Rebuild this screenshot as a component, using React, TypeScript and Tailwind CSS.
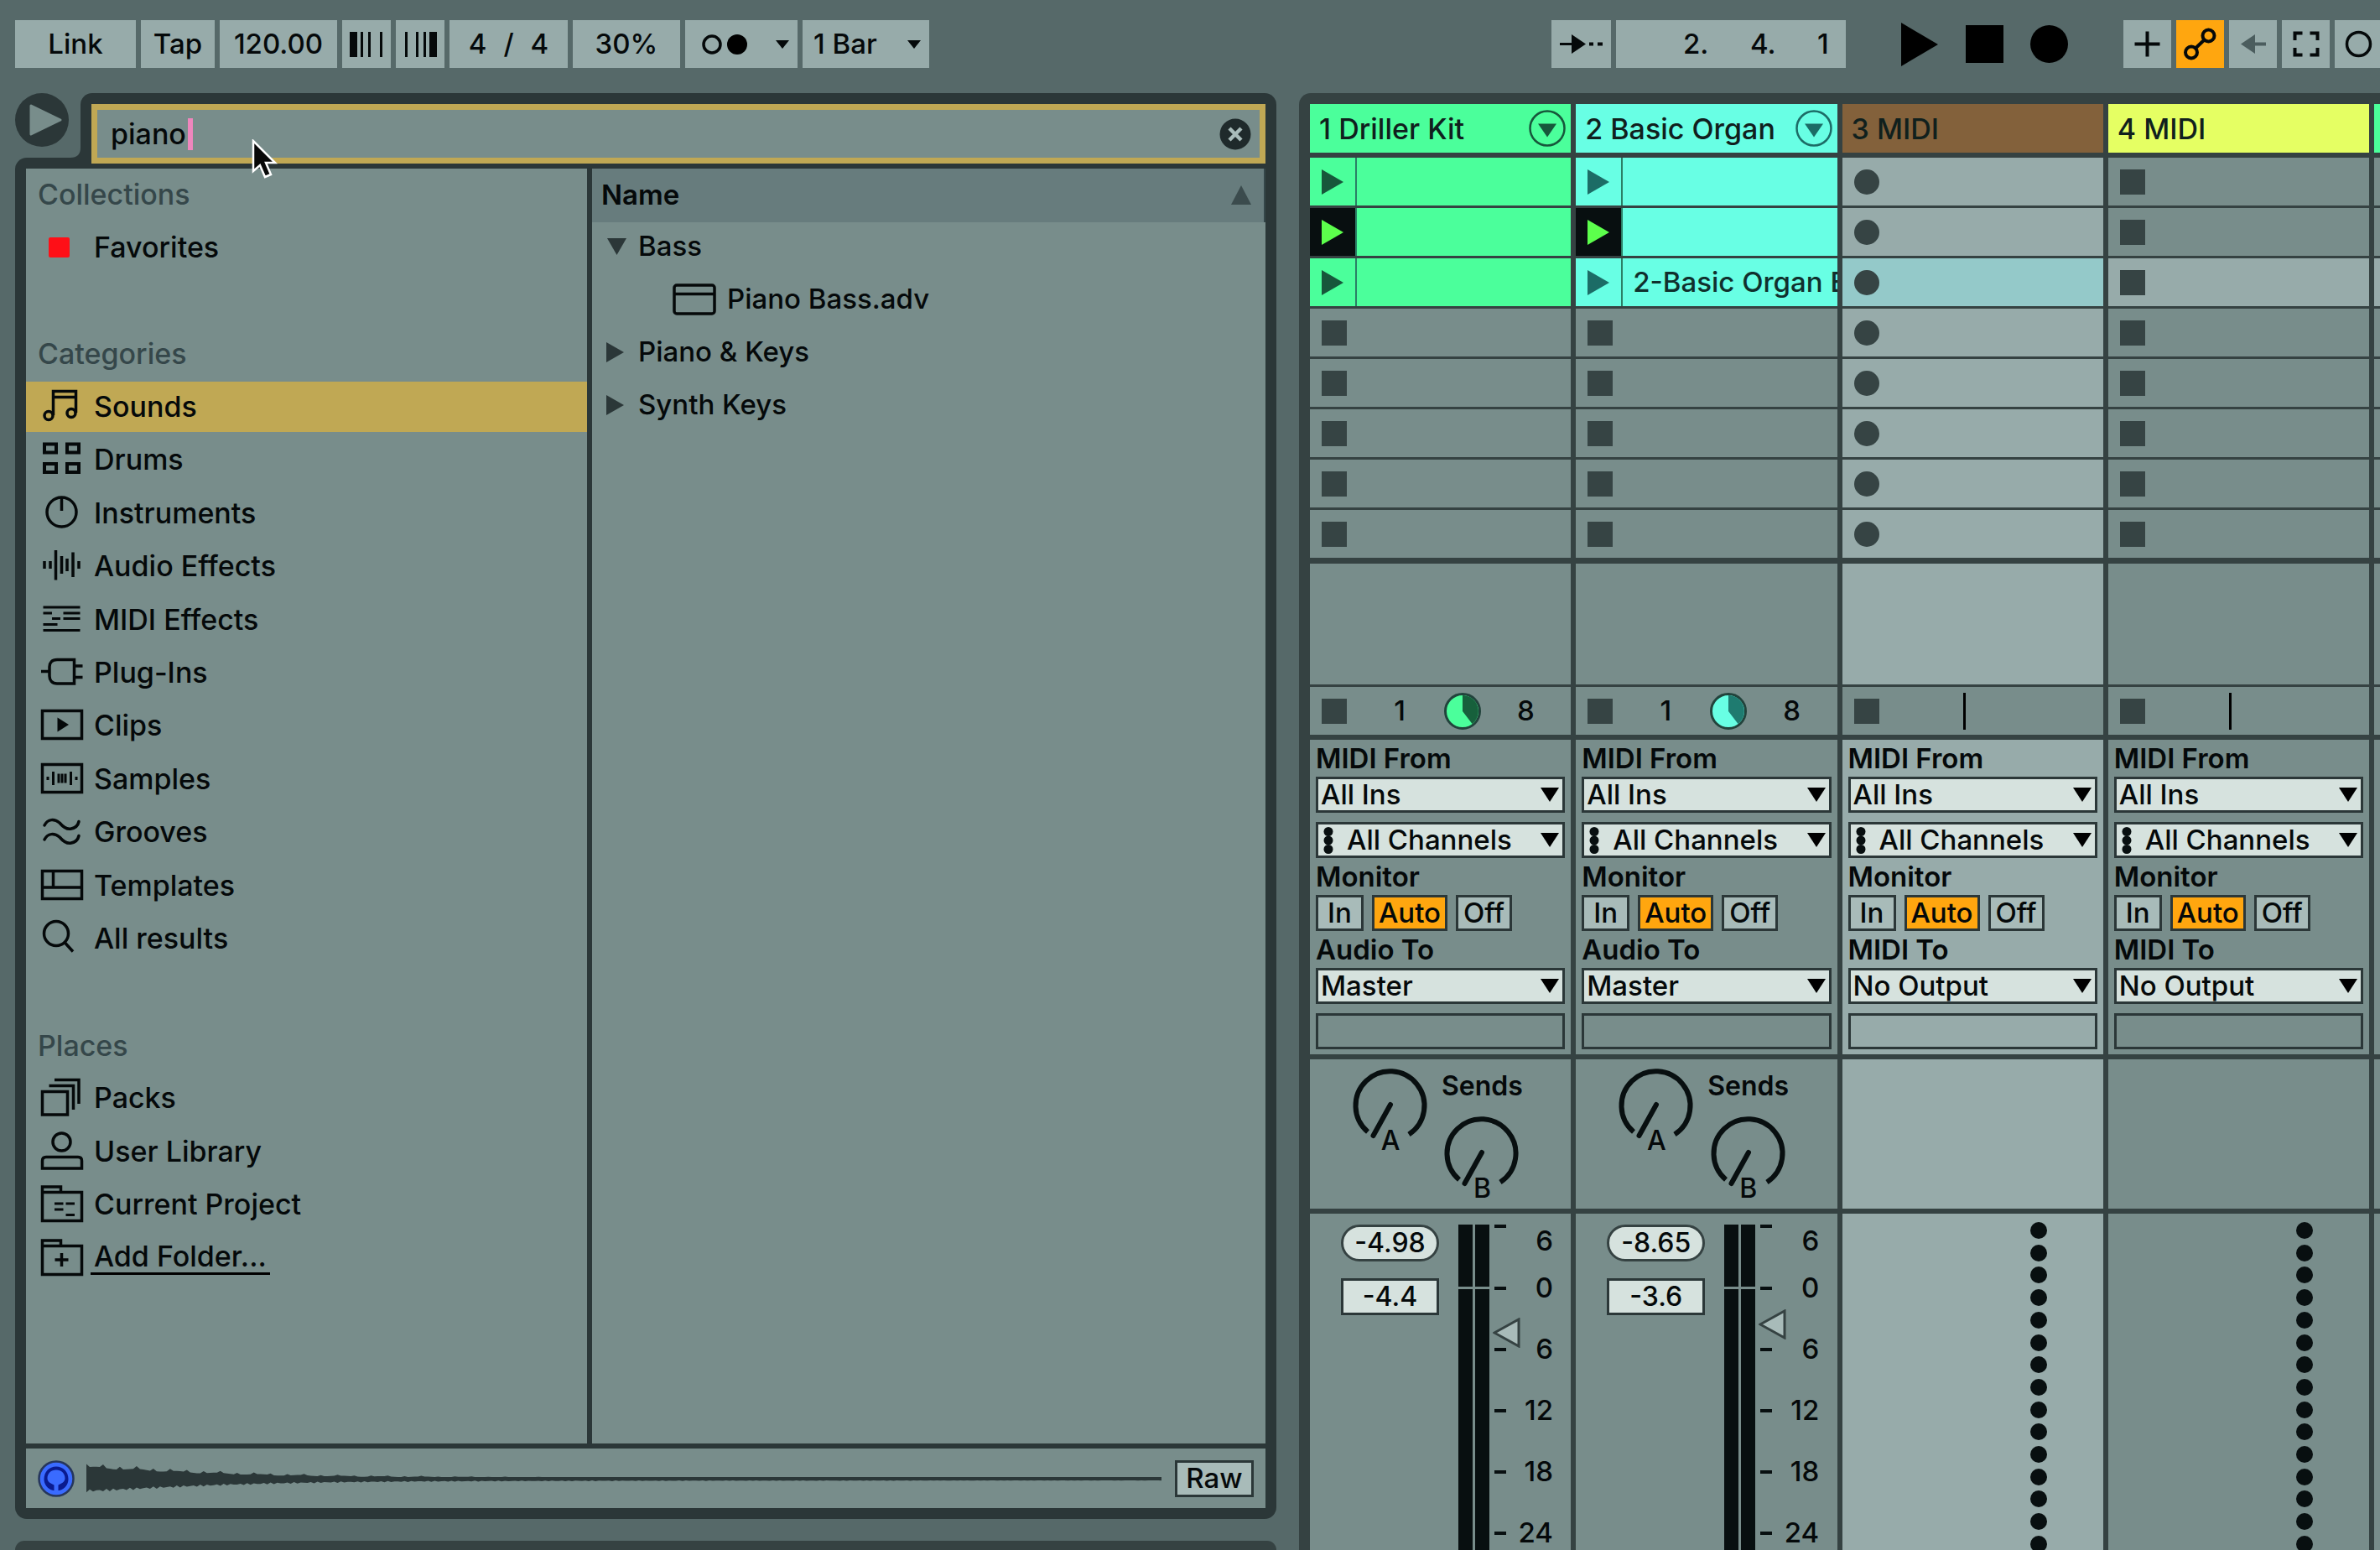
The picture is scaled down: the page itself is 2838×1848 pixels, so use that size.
import React, { useState } from "react";

type IconProps = { children: React.ReactNode };

/* 52px line icon used by the browser sidebar */
function RowIcon({ children }: IconProps) {
  return (
    <svg viewBox="0 0 52 52" className="h-[52px] w-[52px] shrink-0" fill="none" stroke="#05090a" strokeWidth="3.5" aria-hidden="true">
      {children}
    </svg>
  );
}

const icons: Record<string, React.ReactNode> = {
  favorites: <rect x="10" y="14" width="25" height="24" rx="2" fill="#fe0f17" stroke="none" />,
  sounds: (
    <>
      <path d="M15.5 36V7.5H42.5V33M15.5 14.5H42.5" />
      <circle cx="10" cy="36.500" r="5" />
      <circle cx="37" cy="33.500" r="5" />
    </>
  ),
  drums: (
    <path strokeWidth="4" d="M5 7.500H19V17.500H5zM32 7.500H46V17.500H32zM5 31H19V41H5zM32 31H46V41H32z" />
  ),
  instruments: (
    <>
      <circle cx="25.500" cy="24.500" r="17.500" />
      <path d="M25.500 7V23" />
    </>
  ),
  audio: (
    <path d="M5 20V29M12 20V29M18.500 7V42.500M25.500 14V35M32 17V32M39 9.500V39M46 20V29" />
  ),
  midi: (
    <path strokeWidth="3.200" d="M3.500 11H47.500M3.500 18H14M27.500 18H47.500M14 24.500H24M27.500 24.500H47.500M3.500 31.500H20.500M3.500 38.500H47.500" />
  ),
  plug: (
    <path d="M1 24.500H11M40.500 10.500H20C14 10.500 11 14 11 19V30C11 35 14 39 20 39H40.500zM40.500 18H50.500M40.500 31.500H50.500" />
  ),
  clips: (
    <>
      <rect x="2.500" y="8.500" width="47" height="33" />
      <path d="M20.500 16.500L34 25L20.500 33.500z" fill="#05090a" stroke="none" />
    </>
  ),
  samples: (
    <>
      <rect x="2.500" y="8.500" width="47" height="33" />
      <path strokeWidth="3" d="M9 23V27M15.500 17V33M22 19.500V30.500M26 19.500V30.500M30 19.500V30.500M36.500 17V33M43 23V27" />
    </>
  ),
  grooves: (
    <path
      strokeLinecap="round"
      d="M5 18C9 10 17 10 23 15C29 22 33 23 37 22C42 21 45 18 46 13.500M5 35C9 27 17 27 23 32C29 39 33 40 37 39C42 38 45 35 46 30.500"
    />
  ),
  templates: <path d="M2.500 8.500H49.500V41.500H2.500zM2.500 28H49.500M15.500 8.500V28" />,
  search: (
    <>
      <circle cx="19" cy="20" r="14.500" />
      <path d="M29 30.500L39 41.500" />
    </>
  ),
  packs: (
    <path d="M2.500 18.500H32.500V46H2.500zM10.500 11.500H39.500V40M17 4.500H46V33" />
  ),
  user: (
    <>
      <circle cx="25.500" cy="14.500" r="10.500" />
      <path d="M2.500 46V37C2.500 34 4.500 32.500 7 32.500H45C47.500 32.500 49.500 34 49.500 37V46z" />
    </>
  ),
  project: (
    <>
      <path d="M2.500 11.500V5H24.500V11.500M2.500 11.500H49.500V45.500H2.500z" />
      <path strokeWidth="3" d="M17 25H27.500M30.500 25H41M17 32H27.500M30.500 38.500H41" />
    </>
  ),
  add: (
    <path d="M2.500 11.500V5H24.500V11.500M2.500 11.500H49.500V45.500H2.500zM25.500 20V36M17.500 28H33.500" />
  ),
};

type SideRow = { kind: "title" | "item" | "blank"; label?: string; icon?: string };

const sideRows: SideRow[] = [
  { kind: "title", label: "Collections" },
  { kind: "item", label: "Favorites", icon: "favorites" },
  { kind: "blank" },
  { kind: "title", label: "Categories" },
  { kind: "item", label: "Sounds", icon: "sounds" },
  { kind: "item", label: "Drums", icon: "drums" },
  { kind: "item", label: "Instruments", icon: "instruments" },
  { kind: "item", label: "Audio Effects", icon: "audio" },
  { kind: "item", label: "MIDI Effects", icon: "midi" },
  { kind: "item", label: "Plug-Ins", icon: "plug" },
  { kind: "item", label: "Clips", icon: "clips" },
  { kind: "item", label: "Samples", icon: "samples" },
  { kind: "item", label: "Grooves", icon: "grooves" },
  { kind: "item", label: "Templates", icon: "templates" },
  { kind: "item", label: "All results", icon: "search" },
  { kind: "blank" },
  { kind: "title", label: "Places" },
  { kind: "item", label: "Packs", icon: "packs" },
  { kind: "item", label: "User Library", icon: "user" },
  { kind: "item", label: "Current Project", icon: "project" },
  { kind: "item", label: "Add Folder...", icon: "add" },
];

const toolBase = "flex h-[57px] shrink-0 items-center bg-[#97abaa]";
const toolButton = "flex h-[57px] shrink-0 items-center justify-center bg-[#97abaa]";

function Toolbar() {
  return (
    <header className="flex h-[111px] items-start overflow-hidden pt-6 pl-[18px] text-[33px]">
      <div className="flex gap-[6px]">
        <button className={`${toolButton} w-[144px]`}>Link</button>
        <button className={`${toolButton} w-[88px]`}>Tap</button>
        <button className={`${toolButton} w-[140px]`}>120.00</button>
        <button className={`${toolButton} w-[58px]`} aria-label="Nudge down">
          <svg viewBox="0 0 58 57" className="h-[57px] w-[58px]" fill="#05090a">
            <path d="M9 14h9v30h-9zM22 14h3v30h-3zM31 14h3v30h-3zM45 14h3v30h-3z" />
          </svg>
        </button>
        <button className={`${toolButton} w-[58px]`} aria-label="Nudge up">
          <svg viewBox="0 0 58 57" className="h-[57px] w-[58px]" fill="#05090a">
            <path d="M11 14h3v30h-3zM24 14h3v30h-3zM33 14h3v30h-3zM40 14h9v30h-9z" />
          </svg>
        </button>
        <button className={`${toolButton} w-[141px] gap-5`}>
          <span>4</span>
          <span>/</span>
          <span>4</span>
        </button>
        <button className={`${toolButton} w-[128px]`}>30%</button>
        <button className={`${toolButton} w-[134px]`} aria-label="Metronome">
          <svg viewBox="0 0 134 57" className="h-[57px] w-[134px]">
            <circle cx="32" cy="29" r="10" fill="none" stroke="#05090a" strokeWidth="3.500" />
            <circle cx="62" cy="29" r="12" fill="#000" />
            <path d="M108 24h16l-8 10z" fill="#05090a" />
          </svg>
        </button>
        <button className={`${toolBase} w-[151px] justify-between pr-[10px] pl-[13px]`}>
          <span>1 Bar</span>
          <svg viewBox="0 0 16 10" className="h-[10px] w-4" fill="#05090a">
            <path d="M0 0h16l-8 10z" />
          </svg>
        </button>
      </div>
      <div className="ml-auto flex items-start">
        <div className="flex gap-[6px]">
          <button className={`${toolButton} w-[71px]`} aria-label="Follow">
            <svg viewBox="0 0 71 57" className="h-[57px] w-[71px]" fill="#05090a">
              <path d="M10 27h14v-10l17 11.500l-17 11.500v-10h-14zM45 26.500h5v4h-5zM55 26.500h6v4h-6z" />
            </svg>
          </button>
          <div className={`${toolBase} w-[274px] pl-20`}>
            <span className="w-20">2.</span>
            <span className="w-20">4.</span>
            <span>1</span>
          </div>
        </div>
        <div className="flex h-[57px] items-center pr-[66px] pl-[66px]">
          <button aria-label="Play">
            <svg viewBox="0 0 44 52" className="h-[52px] w-[44px]"><path d="M0 0L44 26L0 52z" /></svg>
          </button>
          <button aria-label="Stop" className="ml-[33px] h-[45px] w-[45px] bg-black" />
          <button aria-label="Record" className="ml-8 h-[45px] w-[45px] rounded-full bg-black" />
        </div>
        <div className="flex gap-[6px]">
          <button className={`${toolButton} w-[57px]`} aria-label="Overdub">
            <svg viewBox="0 0 57 57" className="h-[57px] w-[57px]" stroke="#05090a" strokeWidth="4">
              <path d="M13.500 28.500h30M28.500 13.500v30" />
            </svg>
          </button>
          <button className="flex h-[57px] w-[57px] shrink-0 items-center justify-center bg-[#ffa60f]" aria-label="Automation arm">
            <svg viewBox="0 0 57 57" className="h-[57px] w-[57px]" fill="none" stroke="#05090a" strokeWidth="4">
              <circle cx="38.500" cy="18.500" r="7" />
              <circle cx="18" cy="38.500" r="7" />
              <path d="M23 33.500L33.500 23.500" />
            </svg>
          </button>
          <button className={`${toolButton} w-[57px]`} aria-label="Re-enable automation">
            <svg viewBox="0 0 57 57" className="h-[57px] w-[57px]" fill="#4b5d5e">
              <path d="M14 28.500L31 17v9.500h13v4h-13v9.500z" />
            </svg>
          </button>
          <button className={`${toolButton} w-[57px]`} aria-label="Capture MIDI">
            <svg viewBox="0 0 57 57" className="h-[57px] w-[57px]" fill="none" stroke="#05090a" strokeWidth="4">
              <path d="M15.500 24v-8.500h9M33.500 15.500h9v8.500M42.500 33v8.500h-9M24.500 41.500h-9v-8.500" />
            </svg>
          </button>
          <button className="flex h-[57px] w-[54px] shrink-0 items-center overflow-hidden bg-[#97abaa]" aria-label="Session record">
            <svg viewBox="0 0 57 57" className="h-[57px] w-[57px] shrink-0" fill="none" stroke="#05090a" strokeWidth="3.500">
              <circle cx="28.500" cy="28.500" r="14" />
            </svg>
          </button>
        </div>
      </div>
    </header>
  );
}

/* Decaying sample preview: a smooth envelope with a bump every 20px */
function wavePath() {
  const top: string[] = [];
  const bottom: string[] = [];
  for (let x = 0; x <= 1286; x += 4) {
    const env = 1.9 + 11 * Math.exp(-Math.pow(x / 165, 1.3)) + 1.6 * Math.exp(-x / 600);
    const beat = x % 20 === 0 ? 4 * Math.exp(-x / 260) : 0;
    const a = env + beat - 1 + Math.sin(x * 1.7) * 1.1 * Math.exp(-x / 400);
    const b = env + Math.cos(x * 0.9) * 1.8 * Math.exp(-x / 400);
    top.push(`${x} ${(22 - Math.max(a, 1.9)).toFixed(1)}`);
    bottom.unshift(`${x} ${(22 + b).toFixed(1)}`);
  }
  return `M${top.join("L")}L${bottom.join("L")}z`;
}

function Triangle({ open }: { open?: boolean }) {
  return (
    <svg viewBox="0 0 24 24" className="h-6 w-6 shrink-0" fill="#2b3738" aria-hidden="true">
      <path d={open ? "M1 2H24L12.500 22z" : "M0 0L21 12L0 24z"} />
    </svg>
  );
}

function Browser() {
  const [query, setQuery] = useState("piano");
  const [selected, setSelected] = useState("Sounds");
  return (
    <section className="flex min-w-0 flex-col">
      <div className="relative z-10 flex">
        <div className="flex w-[78px] shrink-0 items-start">
          <button aria-label="Hide browser" className="flex h-16 w-16 items-center justify-center rounded-full bg-[#2b3738]">
            <svg viewBox="0 0 64 64" className="h-16 w-16" fill="#788d8b" stroke="#788d8b" strokeWidth="3" strokeLinejoin="round">
              <path d="M19 15L54 32L19 49z" />
            </svg>
          </button>
        </div>
        <div className="relative flex-1 rounded-t-[14px] bg-[#2b3738] px-[13px] pt-[13px]">
          <svg viewBox="0 0 12 12" className="absolute bottom-[7px] -left-3 h-3 w-3" fill="#2b3738" aria-hidden="true">
            <path d="M12 0V12H0C8 12 12 8 12 0z" />
          </svg>
          <label className="flex h-[71px] items-center border-[7px] border-[#c0a854] bg-[#788d8b] pr-[10px] pl-4">
            <span className="sr-only">Search</span>
            <input
              value={query}
              onChange={(e) => setQuery(e.target.value)}
              className="field-sizing-content h-[54px] bg-transparent pr-[2px] text-[34px] leading-[50px] outline-none"
            />
            <span className="h-[38px] w-[6px] bg-[#ee86bd]" />
            <button aria-label="Clear search" className="ml-auto">
              <svg viewBox="0 0 38 38" className="h-[38px] w-[38px]">
                <circle cx="19" cy="19" r="18.500" fill="#1f2a2b" />
                <path d="M12 12L26 26M26 12L12 26" stroke="#a9bcba" strokeWidth="4.500" />
              </svg>
            </button>
          </label>
        </div>
      </div>

      <div className="-mt-[7px] flex flex-1 flex-col rounded-b-[14px] rounded-tl-[14px] bg-[#2b3738] px-[13px] pt-[13px] pb-[13px]">
        <div className="grid flex-1 grid-cols-[669fr_803fr] gap-[6px]">
          <nav className="bg-[#788d8b]">
            <ul className="grid h-[1329px] grid-rows-[repeat(21,minmax(0,1fr))] gap-[3px] text-[34px]">
              {sideRows.map((row, i) => {
                if (row.kind === "blank") return <li key={i} />;
                if (row.kind === "title")
                  return (
                    <li key={i} className="flex items-center pl-[14px] text-[#35474a]">
                      <h2>{row.label}</h2>
                    </li>
                  );
                return (
                  <li key={i} className="flex">
                    <button
                      onClick={() => setSelected(row.label!)}
                      className={
                        selected === row.label
                          ? "flex flex-1 items-center gap-2 bg-[#c0a854] pl-[17px]"
                          : "flex flex-1 items-center gap-2 pl-[17px]"
                      }
                    >
                      <RowIcon>{icons[row.icon!]}</RowIcon>
                      <span
                        className={
                          row.icon === "add"
                            ? "border-b-[3px] border-black px-1 leading-[38px]"
                            : "px-1 leading-[38px]"
                        }
                      >
                        {row.label}
                      </span>
                    </button>
                  </li>
                );
              })}
            </ul>
          </nav>
          <div className="bg-[#788d8b] text-[33px]">
            <div className="flex h-16 items-center justify-between border-r-2 border-[#35474a] bg-[#677c7d] pr-[15px] pl-[11px]">
              <h2 className="font-semibold">Name</h2>
              <svg viewBox="0 0 24 24" className="h-6 w-6" fill="#3b4b4d" aria-hidden="true">
                <path d="M12 0L24 23H0z" />
              </svg>
            </div>
            <ul className="flex flex-col gap-[6px]">
              <li className="flex h-[57px] items-center gap-[14px] pl-[17px]">
                <Triangle open />
                Bass
              </li>
              <li className="flex h-[57px] items-center gap-[13px] pl-[96px]">
                <svg viewBox="0 0 52 38" className="h-[38px] w-[52px]" fill="none" stroke="#05090a" strokeWidth="3.500">
                  <rect x="2" y="2" width="48" height="34" rx="3" />
                  <path d="M2 12.500H50" />
                </svg>
                Piano Bass.adv
              </li>
              <li className="flex h-[57px] items-center gap-[14px] pl-[17px]">
                <Triangle />
                Piano &amp; Keys
              </li>
              <li className="flex h-[57px] items-center gap-[14px] pl-[17px]">
                <Triangle />
                Synth Keys
              </li>
            </ul>
          </div>
        </div>
        <div className="mt-[6px] flex h-[71px] items-center bg-[#788d8b] pr-[14px] pl-[14px]">
          <button aria-label="Preview" className="shrink-0">
            <svg viewBox="0 0 44 44" className="h-[44px] w-[44px]">
              <circle cx="22" cy="22" r="20.500" fill="#3a6bff" stroke="#26365c" strokeWidth="2.500" />
              <path d="M18.500 36C11 34.500 7.500 28 7.500 22.500C7.500 14 13.500 7.500 22 7.500S36.500 14 36.500 22.500C36.500 28 33 34.500 25.500 36z" fill="#0a1b8f" />
              <path d="M19.500 37V29.500C15.500 27.500 11.500 26 11.500 21.500C11.500 15.500 16 11.500 22 11.500S32.500 15.500 32.500 21.500C32.500 26 28.500 27.500 24.500 29.500V37z" fill="#3a6bff" />
            </svg>
          </button>
          <svg viewBox="0 0 1286 44" preserveAspectRatio="none" className="mr-[14px] ml-[14px] h-[44px] min-w-0 flex-1" fill="#2b3738">
            <path d={wavePath()} />
          </svg>
          <button className="flex h-[44px] w-[94px] shrink-0 items-center justify-center border-[3px] border-[#2b3738] bg-[#a8bbb9] text-[33px]">
            Raw
          </button>
        </div>
      </div>
      <div className="mt-[26px] h-[11px] rounded-t-[14px] bg-[#354242]" />
    </section>
  );
}

type Slot = { kind: "clip" | "playing" | "stop" | "record"; label?: string; lit?: boolean };
type Track = {
  name: string;
  header: string;
  clip: string;
  glyph: string;
  fold?: boolean;
  light?: boolean;
  slots: Slot[];
  out: string;
  outLabel: string;
  pie?: { full: string; dark: string };
  peak?: string;
  volume?: string;
  thumb?: string;
};

const stop: Slot = { kind: "stop" };
const rec: Slot = { kind: "record" };

const tracks: Track[] = [
  {
    name: "1 Driller Kit",
    header: "bg-[#4bff9b]",
    clip: "bg-[#4bff9b]",
    glyph: "#17573b",
    fold: true,
    slots: [{ kind: "clip" }, { kind: "playing" }, { kind: "clip" }, stop, stop, stop, stop, stop],
    out: "Master",
    outLabel: "Audio To",
    pie: { full: "#4bff9b", dark: "#17603c" },
    peak: "-4.98",
    volume: "-4.4",
    thumb: "top-[111px]",
  },
  {
    name: "2 Basic Organ",
    header: "bg-[#68ffe4]",
    clip: "bg-[#68ffe4]",
    glyph: "#1c6c66",
    fold: true,
    slots: [{ kind: "clip" }, { kind: "playing" }, { kind: "clip", label: "2-Basic Organ E" }, stop, stop, stop, stop, stop],
    out: "Master",
    outLabel: "Audio To",
    pie: { full: "#68ffe4", dark: "#1f7b70" },
    peak: "-8.65",
    volume: "-3.6",
    thumb: "top-[101px]",
  },
  {
    name: "3 MIDI",
    header: "bg-[#83613b]",
    clip: "",
    glyph: "",
    light: true,
    slots: [rec, rec, { kind: "record", lit: true }, rec, rec, rec, rec, rec],
    out: "No Output",
    outLabel: "MIDI To",
  },
  {
    name: "4 MIDI",
    header: "bg-[#e5ff63]",
    clip: "",
    glyph: "",
    slots: [stop, stop, { kind: "stop", lit: true }, stop, stop, stop, stop, stop],
    out: "No Output",
    outLabel: "MIDI To",
  },
];

function SlotRow({ slot, track }: { slot: Slot; track: Track }) {
  if (slot.kind === "clip" || slot.kind === "playing") {
    const playing = slot.kind === "playing";
    return (
      <div className={`flex h-[57px] overflow-hidden ${track.clip}`}>
        <button
          aria-label="Launch clip"
          className={playing ? "w-[54px] shrink-0 bg-[#080f10]" : "w-[54px] shrink-0"}
        >
          <svg viewBox="0 0 54 57" className="h-[57px] w-[54px]" fill={playing ? "#5cff4c" : track.glyph}>
            <path d="M14 14L40 29L14 44z" />
          </svg>
        </button>
        <div className="flex min-w-0 flex-1 items-center overflow-hidden border-l-2 border-[#2b7f66] pl-3 text-[33px] whitespace-nowrap text-[#10302d]">
          {slot.label}
        </div>
      </div>
    );
  }
  const bg = slot.lit ? (track.light ? "bg-[#94c9c9]" : "bg-[#97abaa]") : track.light ? "bg-[#97abaa]" : "bg-[#788d8b]";
  return (
    <div className={`flex h-[57px] items-center pl-[14px] ${bg}`}>
      <button
        aria-label={slot.kind === "record" ? "Record into slot" : "Stop"}
        className={slot.kind === "record" ? "h-[30px] w-[30px] rounded-full bg-[#364444]" : "h-[30px] w-[30px] bg-[#364444]"}
      />
    </div>
  );
}

function IoSelect({ label, value, dots }: { label: string; value: string; dots?: boolean }) {
  return (
    <div className="relative h-[43px]">
      <select
        aria-label={label}
        defaultValue={value}
        className={
          dots
            ? "block h-full w-full appearance-none border-[3px] border-[#2b3738] bg-[#d6e2de] pl-[34px] text-[33px] leading-[37px]"
            : "block h-full w-full appearance-none border-[3px] border-[#2b3738] bg-[#d6e2de] pl-[3px] text-[33px] leading-[37px]"
        }
      >
        <option>{value}</option>
      </select>
      {dots && (
        <svg viewBox="0 0 12 32" className="pointer-events-none absolute top-[6px] left-[9px] h-8 w-3" fill="#080f10" aria-hidden="true">
          <circle cx="6" cy="5.500" r="5.500" />
          <circle cx="6" cy="16" r="5.500" />
          <circle cx="6" cy="26.500" r="5.500" />
        </svg>
      )}
      <svg viewBox="0 0 22 17" className="pointer-events-none absolute top-[13px] right-[7px] h-[17px] w-[22px]" aria-hidden="true">
        <path d="M0 0H22L11 17z" />
      </svg>
    </div>
  );
}

function Knob({ letter }: { letter: string }) {
  return (
    <div role="slider" aria-label={`Send ${letter}`} aria-valuenow={0} className="flex w-[88px] flex-col items-center">
      <svg viewBox="0 0 88 72" className="h-[72px] w-[88px] overflow-visible" fill="none" stroke="#080f10" strokeWidth="6">
        <path d="M17 75.500A41 41 0 1 1 66 78.500" />
        <path d="M44 43L23.500 80" strokeLinecap="round" />
      </svg>
      <span className="text-[32px] leading-[28px]">{letter}</span>
    </div>
  );
}

const scale = ["6", "0", "6", "12", "18", "24"];

function Mixer({ track }: { track: Track }) {
  return (
    <div className="flex h-full items-start pt-[13px] pl-[37px]">
      <div className="flex w-[117px] flex-col gap-5 text-center text-[32px]">
        <output className="flex h-[44px] items-center justify-center rounded-full border-[3px] border-[#354242] bg-[#d6e2de]">{track.peak}</output>
        <output className="flex h-[44px] items-center justify-center border-[3px] border-[#2b3738] bg-[#d6e2de]">{track.volume}</output>
      </div>
      <div className="relative ml-[23px] grid w-[37px] grid-cols-2 grid-rows-[74px_320px] gap-x-[3px] gap-y-[3px]">
        <div className="bg-[#080f10]" />
        <div className="bg-[#080f10]" />
        <div className="bg-[#080f10]" />
        <div className="bg-[#080f10]" />
        <svg viewBox="0 0 34 36" className={`absolute left-[41px] h-[36px] w-[34px] ${track.thumb}`} aria-hidden="true">
          <path d="M2 18L31 2V34z" fill="#a8bbb9" stroke="#354242" strokeWidth="3" />
        </svg>
      </div>
      <ul className="ml-[6px] w-[70px] text-right text-[33px]">
        {scale.map((n, i) => (
          <li key={i} className={i === 0 ? "flex h-[39px] items-start justify-between" : "flex h-[73px] items-center justify-between"}>
            <span className="h-1 w-[14px] bg-[#080f10]" />
            <span className={i === 0 ? "leading-[38px]" : ""}>{n}</span>
          </li>
        ))}
      </ul>
    </div>
  );
}

function TrackColumn({ track }: { track: Track }) {
  const [monitor, setMonitor] = useState("Auto");
  const bg = track.light ? "bg-[#97abaa]" : "bg-[#788d8b]";
  const small = "flex h-[43px] items-center justify-center border-[3px] border-[#2b3738]";
  return (
    <article className="flex min-w-0 flex-col">
      <div className={`flex h-[58px] items-center justify-between pr-[6px] pl-[11px] text-[34px] text-[#10201d] ${track.header}`}>
        <h2>{track.name}</h2>
        {track.fold && (
          <button aria-label="Unfold devices">
            <svg viewBox="0 0 44 44" className="h-[44px] w-[44px]" fill="none" stroke={track.glyph} strokeWidth="2.500">
              <circle cx="22" cy="22" r="20.500" />
              <path d="M11 16.500H33L22 32.500z" fill={track.glyph} stroke="none" />
            </svg>
          </button>
        )}
      </div>
      <div className="mt-[6px] flex flex-col gap-[3px]">
        {track.slots.map((s, i) => (
          <SlotRow key={i} slot={s} track={track} />
        ))}
      </div>
      <div className={`mt-[7px] h-[144px] ${bg}`} />
      <div className="mt-[3px] flex h-[57px] items-center bg-[#788d8b] pl-[14px] text-[33px]">
        <button aria-label="Stop track" className="h-[30px] w-[30px] bg-[#364444]" />
        {track.pie ? (
          <>
            <span className="ml-[53px] w-5 text-center">1</span>
            <svg viewBox="0 0 44 44" className="ml-[43px] h-[44px] w-[44px]">
              <circle cx="22" cy="22" r="20.500" fill={track.pie.full} stroke="#22433c" strokeWidth="3" />
              <path d="M22 22V3A19 19 0 0 1 33.500 37z" fill={track.pie.dark} />
            </svg>
            <span className="ml-[43px] w-5 text-center">8</span>
          </>
        ) : (
          <span className="ml-[100px] h-[44px] w-[3px] bg-black" />
        )}
      </div>
      <div className={`mt-[6px] h-[375px] px-[7px] text-[33px] ${bg}`}>
        <h3 className="h-11 leading-[44px] font-semibold">MIDI From</h3>
        <IoSelect label="MIDI From" value="All Ins" />
        <div className="h-[11px]" />
        <IoSelect label="Input channel" value="All Channels" dots />
        <h3 className="h-11 leading-[44px] font-semibold">Monitor</h3>
        <div className="flex gap-[10px]">
          {["In", "Auto", "Off"].map((m) => (
            <button
              key={m}
              onClick={() => setMonitor(m)}
              className={`${small} ${monitor === m ? "bg-[#ffa60f]" : "bg-[#a8bbb9]"} ${m === "In" ? "w-[57px]" : m === "Auto" ? "w-[90px]" : "w-[67px]"}`}
            >
              {m}
            </button>
          ))}
        </div>
        <h3 className="h-11 leading-[44px] font-semibold">{track.outLabel}</h3>
        <IoSelect label={track.outLabel} value={track.out} />
        <div className="mt-[11px] h-[43px] border-[3px] border-[#2b3738]" />
      </div>
      <div className={`mt-[6px] h-[178px] ${bg}`}>
        {track.pie && (
          <div className="flex pt-[11px] pl-[52px]">
            <Knob letter="A" />
            <div className="ml-[17px] flex flex-col items-center">
              <h3 className="h-[57px] text-[32px] leading-[42px] font-semibold">Sends</h3>
              <Knob letter="B" />
            </div>
          </div>
        )}
      </div>
      <div className={`mt-[6px] min-h-0 flex-1 overflow-hidden ${bg}`}>
        {track.pie ? (
          <Mixer track={track} />
        ) : (
          <div className="ml-[224px] flex h-[404px] w-5 flex-col justify-between pt-[10px]">
            {Array.from({ length: 15 }, (_, i) => (
              <span key={i} className="h-5 w-5 shrink-0 rounded-full bg-[#080f10]" />
            ))}
          </div>
        )}
      </div>
    </article>
  );
}

function Session() {
  return (
    <section className="grid min-h-0 min-w-0 grid-cols-[repeat(4,minmax(0,1fr))_7px] grid-rows-[minmax(0,1fr)] gap-[6px] rounded-tl-[14px] bg-[#354242] pt-[13px] pl-[13px]">
      {tracks.map((t) => (
        <TrackColumn key={t.name} track={t} />
      ))}
      <div className="flex flex-col">
        <div className="h-[58px] bg-[#4bff9b]" />
        <div className="mt-[6px] flex flex-col gap-[3px]">
          {Array.from({ length: 8 }, (_, i) => (
            <div key={i} className={i === 2 ? "h-[57px] bg-[#97abaa]" : "h-[57px] bg-[#788d8b]"} />
          ))}
        </div>
        <div className="mt-[7px] h-[144px] bg-[#788d8b]" />
        <div className="mt-[3px] h-[57px] bg-[#788d8b]" />
        <div className="mt-[6px] h-[375px] bg-[#788d8b]" />
        <div className="mt-[6px] h-[178px] bg-[#788d8b]" />
        <div className="mt-[6px] flex-1 bg-[#788d8b]" />
      </div>
    </section>
  );
}

export default function App() {
  return (
    <div className="relative flex h-screen flex-col overflow-hidden bg-[#566969] font-['Inter',sans-serif] font-medium text-[#05090a]">
      <Toolbar />
      <main className="grid min-h-0 flex-1 grid-cols-[1504fr_1289fr] grid-rows-[minmax(0,1fr)] gap-[27px] pl-[18px]">
        <Browser />
        <Session />
      </main>
      <svg viewBox="0 0 32 48" className="pointer-events-none absolute top-[166px] left-[300px] z-20 h-12 w-8" aria-hidden="true">
        <path d="M2 2V38L10 31L16 45L23 42L17 28H28z" fill="#080808" stroke="#fff" strokeWidth="2.500" />
      </svg>
    </div>
  );
}
